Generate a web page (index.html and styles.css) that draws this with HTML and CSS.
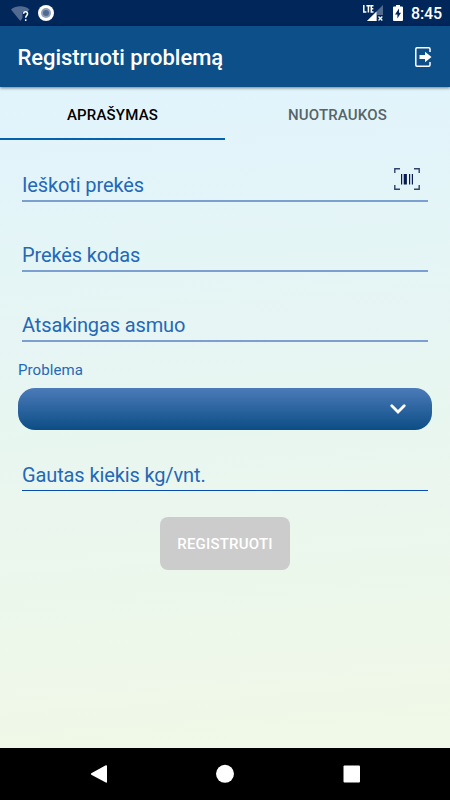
FILE: index.html
```html
<!DOCTYPE html>
<html lang="lt">
<head>
  <meta charset="UTF-8" />
  <meta name="viewport" content="width=device-width, initial-scale=1.0"/>
  <title>Registruoti problemą</title>
  <link rel="stylesheet" href="styles.css">
</head>
<body>
  <div class="screen">
    <div class="status-bar">
      <svg class="wifi-icon" width="20" height="17" viewBox="0 0 20 17">
        <path d="M0 3.500C5-.8 13.500-.8 18.500 3.500L9.300 15Z" fill="#536b91"/>
        <path d="M11.500 6h8v11h-8z" fill="#00265a"/>
        <path d="M12.600 7.800C12.800 5 17 5.200 16.500 8C16.200 9.500 14.700 9.700 14.700 11.700M14.700 13.300V15" fill="none" stroke="#fff" stroke-width="1.500"/>
      </svg>
      <svg class="record-icon" width="16" height="16" viewBox="0 0 16 16">
        <circle cx="8" cy="8" r="8" fill="#fff"/>
        <circle cx="8" cy="8" r="5" fill="#8fa1b9"/>
        <circle cx="8" cy="8" r="3" fill="#506b93"/>
      </svg>
      <svg class="signal-icon" width="21" height="17" viewBox="0 0 21 17">
        <path d="M20 0V16H4Z" fill="#536b91"/>
        <path d="M13.500 6.500V16H4Z" fill="#fff"/>
        <path d="M14 10h7v7h-7z" fill="#00265a"/>
        <path d="M15.500 11.500l3.800 4M19.300 11.500l-3.800 4" stroke="#fff" stroke-width="1.300"/>
        <path d="M.8 0V7H3.400M3.400.7H7.400M5.400.7V7.500M10.500.7H8.300V7H10.500M8.300 3.800H10.300" fill="none" stroke="#fff" stroke-width="1.500"/>
      </svg>
      <svg class="battery-icon" width="10" height="16" viewBox="0 0 10 16">
        <path d="M3 0H7V1.500H9Q10 1.500 10 2.500V15Q10 16 9 16H1Q0 16 0 15V2.500Q0 1.500 1 1.500H3Z" fill="#fff"/>
        <path d="M6 3.500L2 9.500H4.400V13.500L8 7.700H6Z" fill="#00265a"/>
      </svg>
      <span class="clock">8:45</span>
    </div>

    <header class="header">
      <h1>Registruoti problemą</h1>
      <button class="exit-btn" aria-label="Atsijungti">
        <svg width="17" height="20" viewBox="0 0 17 20">
          <path d="M15 5V2Q15 .8 13.800 .8H2Q.8 .8 .8 2V18Q.8 19.200 2 19.200H13.800Q15 19.200 15 18V15" fill="none" stroke="#fff" stroke-width="1.500"/>
          <path d="M4.500 8H10V4.800L16.500 10L10 15.200V12H4.500Z" fill="#fff"/>
        </svg>
      </button>
    </header>

    <nav class="tabs">
      <button class="tab active"><span>APRAŠYMAS</span></button>
      <button class="tab"><span>NUOTRAUKOS</span></button>
    </nav>

    <main class="form">
      <div class="field">
        <span>Ieškoti prekės</span>
        <svg class="barcode-icon" width="26" height="22" viewBox="0 0 26 22">
          <path d="M.8 5V.8H6M20 .8H25.200V5M25.200 17V21.200H20M6 21.200H.8V17" fill="none" stroke="#30426d" stroke-width="1.400"/>
          <path d="M7 6h1.200v10.500H7zM9.700 6h3.200v10.500H9.700zM15 6h1.200v10.500H15zM17.800 6h1.200v10.500H17.800z" fill="#071b54"/>
        </svg>
      </div>
      <div class="field"><span>Prekės kodas</span></div>
      <div class="field"><span>Atsakingas asmuo</span></div>

      <div class="label">Problema</div>
      <div class="select">
        <svg width="16" height="10" viewBox="0 0 16 10">
          <path d="M1.800 1.700L8 7.900L14.200 1.700" fill="none" stroke="#fff" stroke-width="2.800" stroke-linecap="round"/>
        </svg>
      </div>

      <div class="field amount"><span>Gautas kiekis kg/vnt.</span></div>
      <button class="submit" disabled><span>REGISTRUOTI</span></button>
    </main>

    <div class="nav-bar">
      <svg width="126" height="52" viewBox="0 0 126 52">
        <path d="M54.300 25.200L68.800 17.200Q70 17 70 18V34Q70 35 68.800 34.600L54.300 26.800Q53.300 26 54.300 25.200Z" fill="#fff"/>
      </svg>
      <svg width="126" height="52" viewBox="0 0 126 52">
        <circle cx="62" cy="25.800" r="9" fill="#fff"/>
      </svg>
      <svg width="126" height="52" viewBox="0 0 126 52">
        <rect x="54.500" y="17.500" width="16.500" height="17" rx="1" fill="#fff"/>
      </svg>
    </div>
  </div>
</body>
</html>
```

FILE: styles.css
```css
* {
  box-sizing: border-box;
}
body {
  margin: 0;
  font-family: Roboto, sans-serif;
}
button {
  font-family: inherit;
  border: none;
  background: none;
  padding: 0;
}
svg {
  display: block;
  flex: none;
}
.screen {
  width: 450px;
  height: 800px;
  display: flex;
  flex-direction: column;
  overflow: hidden;
  background: linear-gradient(176deg, #e1f4fc 12%, #e8f6f1 50%, #f0f8e7 92%);
}
.status-bar {
  height: 26px;
  flex: none;
  display: flex;
  align-items: center;
  padding: 0 8px 0 11px;
  background: #00265a;
}
.wifi-icon {
  margin-top: 2px;
}
.record-icon {
  margin-left: 7px;
}
.signal-icon {
  margin-left: auto;
}
.battery-icon {
  margin: 0 8px 0 9px;
}
.clock {
  color: #fff;
  font-size: 16px;
  font-weight: 500;
  line-height: 26px;
  padding-top: 2px;
  letter-spacing: -0.1px;
}
.header {
  height: 61px;
  flex: none;
  display: flex;
  align-items: center;
  justify-content: space-between;
  padding: 2px 18px 0 17.5px;
  background: #0c4f89;
  box-shadow: 0 1px 3px rgba(0, 0, 0, 0.5);
}
.header h1 {
  margin: 0;
  color: #fff;
  font-size: 22px;
  font-weight: 500;
  letter-spacing: -0.04px;
}
.exit-btn {
  margin-top: -2px;
}
.tabs {
  height: 53px;
  flex: none;
  display: flex;
}
.tab {
  flex: 1;
  padding-top: 4px;
  color: #566468;
  font-size: 15px;
  font-weight: 500;
  letter-spacing: 0.18px;
  border-bottom: 2px solid transparent;
}
.tab.active {
  color: #000;
  border-bottom-color: #0561b0;
}
.form {
  flex: 1;
  display: flex;
  flex-direction: column;
  padding: 0 18px;
}
.field {
  height: 62px;
  flex: none;
  display: flex;
  align-items: flex-end;
  justify-content: space-between;
  margin: 0 4px 8px;
  padding: 0 8px 3px 0;
  border-bottom: 2px solid #7ba0d0;
  color: #2468b8;
  font-size: 20px;
  line-height: 24px;
  letter-spacing: -0.12px;
}
.barcode-icon {
  margin-bottom: 7px;
}
.label {
  color: #2468b8;
  font-size: 15px;
  line-height: 20px;
  letter-spacing: 0.1px;
  margin: 10px 0 8px;
}
.select {
  height: 42px;
  flex: none;
  display: flex;
  align-items: center;
  justify-content: flex-end;
  padding-right: 26px;
  border-radius: 17px;
  background: linear-gradient(#4b7bb9, #0c4d85);
}
.field.amount {
  height: 61px;
  margin-bottom: 26px;
  border-bottom: 1px solid #0a4db0;
}
.submit {
  align-self: center;
  width: 130px;
  height: 53px;
  border-radius: 8px;
  background: #ccc;
  color: #fff;
  font-size: 15px;
  font-weight: 500;
  letter-spacing: 0.2px;
}
.nav-bar {
  height: 52px;
  flex: none;
  display: flex;
  justify-content: center;
  padding-left: 2px;
  background: #000;
}
```
